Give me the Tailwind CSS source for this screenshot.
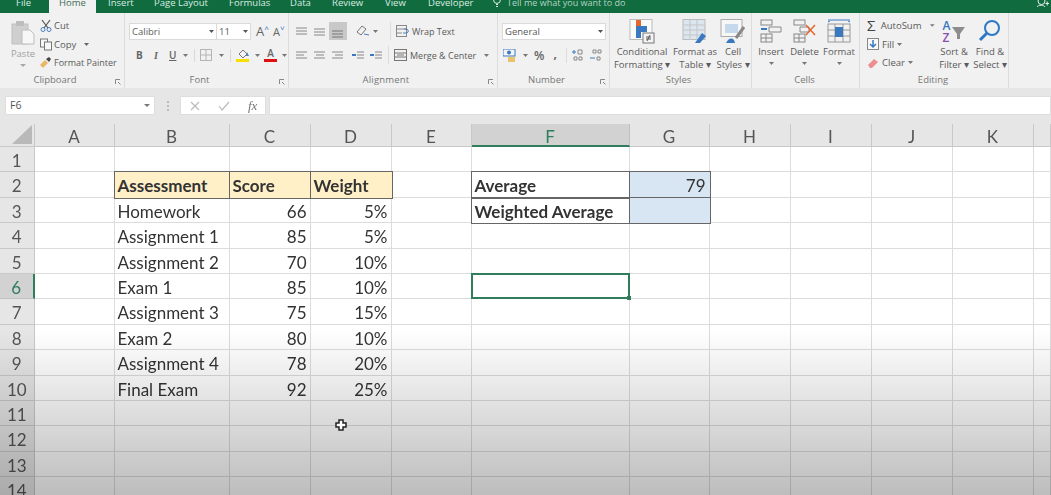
<!DOCTYPE html>
<html lang="en">
  <head>
    <meta charset="UTF-8" />
    <title>Weighted average</title>
    <script src="https://cdn.jsdelivr.net/npm/@tailwindcss/browser@4"></script>
  </head>
  <body class="w-[1051px] h-[495px] overflow-hidden bg-white font-['Open_Sans',sans-serif] text-[#555]">
    <div class="relative w-full h-full overflow-hidden blur-[0.5px]">
      <!-- tabs -->
      <div class="h-[13px] bg-[#106b3f] flex items-end pl-[5px] text-[9.5px] leading-[20px] text-[#dcebe3] relative overflow-hidden">
        <span class="h-[13px] px-[11px] flex items-end">File</span>
        <span class="h-[13px] w-[47px] ml-[7px] bg-[#f1f1f1] text-[#3f6b55] flex items-end justify-center">Home</span>
        <span class="h-[13px] ml-[12px] w-[23px] flex items-end">Insert</span>
        <span class="h-[13px] ml-[23px] w-[51px] flex items-end whitespace-nowrap">Page Layout</span>
        <span class="h-[13px] ml-[24px] w-[38px] flex items-end">Formulas</span>
        <span class="h-[13px] ml-[23px] w-[19px] flex items-end">Data</span>
        <span class="h-[13px] ml-[23px] w-[30px] flex items-end">Review</span>
        <span class="h-[13px] ml-[23px] w-[20px] flex items-end">View</span>
        <span class="h-[13px] ml-[23px] w-[41px] flex items-end">Developer</span>
        <svg class="ml-[23px] self-start -mt-[4px]" width="10" height="12" viewBox="0 0 10 12" fill="none" stroke="#dcebe3"><circle cx="5" cy="4" r="3.400" /><path d="M4 8.500h2M4 10.500h2" /></svg>
        <span class="h-[13px] ml-[5px] flex items-end whitespace-nowrap text-[9px] text-[#b7d3c4]">Tell me what you want to do</span>
        <svg class="absolute right-[2px] top-0" width="12" height="13" viewBox="0 0 12 13" fill="none" stroke="#e6f0ea"><circle cx="4.500" cy="1" r="3.500" /><path d="M0 7c1-2.400 7-2.400 8 0M8.500 3.500h3.500M10.200 1.500v4" /></svg>
      </div>

      <!-- ribbon -->
      <div class="h-[75px] bg-[#f1f1f1] flex text-[9.5px] leading-[13px] text-[#5a5a5a]">
        <!-- clipboard -->
        <div class="w-[125px] border-r border-[#dcdcdc] flex flex-col relative">
          <div class="flex-1 flex pl-[9px] pt-[6px]">
            <div class="w-[28px] flex flex-col items-center text-[#a0a0a0]">
              <svg class="mt-[1px]" width="24" height="25" viewBox="0 0 24 25"><rect x="1" y="4" width="16" height="20" fill="#cfcfcf" stroke="#c0c0c0" /><rect x="5" y="1" width="8" height="5" fill="#bdbdbd" /><path d="M11 10h8l4 4v10H11z" fill="#f7f7f7" stroke="#bdbdbd" /></svg>
              <span class="mt-[2px]">Paste</span>
              <svg class="mt-[4px]" width="6" height="4" viewBox="0 0 6 4"><path d="M0 0h6L3 3z" fill="#a8a8a8" /></svg>
            </div>
            <div class="ml-[3px] flex flex-col gap-[5.500px]">
              <div class="flex items-center gap-[2px] h-[13px]">
                <svg width="12" height="13" viewBox="0 0 12 13" fill="none"><path d="M2 1l6 8M10 1L4 9" stroke="#555" stroke-width="1.200" /><circle cx="3" cy="10.500" r="2" stroke="#4a7fc0" /><circle cx="9" cy="10.500" r="2" stroke="#4a7fc0" /></svg>
                <span>Cut</span>
              </div>
              <div class="flex items-center gap-[2px] h-[13px]">
                <svg width="12" height="13" viewBox="0 0 12 13" fill="none" stroke="#777"><rect x="0.500" y="1" width="7" height="8" fill="#f7f7f7" /><rect x="4.500" y="4" width="7" height="8" fill="#f7f7f7" /></svg>
                <span>Copy</span>
                <svg class="ml-[6px]" width="5" height="3" viewBox="0 0 5 3"><path d="M0 0h5L2.500 3z" fill="#666" /></svg>
              </div>
              <div class="flex items-center gap-[2px] h-[13px] -ml-[1px]">
                <svg width="13" height="13" viewBox="0 0 13 13"><path d="M1 9l5-5 3 3-5 5z" fill="#e8b868" /><path d="M7 3l3-2 2 2-2 3z" fill="#444" /></svg>
                <span class="text-[9px] whitespace-nowrap">Format Painter</span>
              </div>
            </div>
          </div>
          <div class="h-[14px] text-center pr-[14px] text-[#777] leading-[12px]">Clipboard</div>
          <svg class="absolute right-[3px] bottom-[3px]" width="6" height="6" viewBox="0 0 6 6" fill="none" stroke="#888"><path d="M0.500 5V0.500H5M3 3l2.500 2.500" /></svg>
        </div>

        <!-- font -->
        <div class="w-[164px] border-r border-[#dcdcdc] flex flex-col relative">
          <div class="flex-1 pl-[4px] pt-[10px]">
            <div class="flex items-center">
              <div class="w-[88px] h-[17px] bg-white border border-[#dadada] flex items-center justify-between px-[2px]">Calibri<svg width="5" height="3" viewBox="0 0 5 3"><path d="M0 0h5L2.500 3z" fill="#555" /></svg></div>
              <div class="w-[34px] h-[17px] bg-white border-y border-r border-[#dadada] flex items-center justify-between px-[2px]">11<svg width="5" height="3" viewBox="0 0 5 3"><path d="M0 0h5L2.500 3z" fill="#555" /></svg></div>
              <span class="ml-[5px] text-[13px] text-[#666]">A</span><span class="text-[8px] text-[#4a7fc0] -mt-[8px]">˄</span>
              <span class="ml-[4px] text-[11px] text-[#666]">A</span><span class="text-[8px] text-[#4a7fc0] -mt-[8px]">˅</span>
            </div>
            <div class="flex items-center h-[14px] mt-[8px] pl-[7px] text-[10px] text-[#666]">
              <b class="w-[8px]">B</b>
              <i class="ml-[10px] w-[7px] font-['Liberation_Serif'] font-bold">I</i>
              <u class="ml-[8px] w-[8px] font-semibold">U</u>
              <svg class="ml-[6px]" width="5" height="3" viewBox="0 0 5 3"><path d="M0 0h5L2.500 3z" fill="#777" /></svg>
              <div class="ml-[6px] w-px h-[13px] bg-[#d8d8d8]"></div>
              <svg class="ml-[5px]" width="12" height="12" viewBox="0 0 12 12" fill="none" stroke="#b5b5b5"><rect x="0.500" y="0.500" width="11" height="11" /><path d="M6 0v12M0 6h12" /></svg>
              <svg class="ml-[7px]" width="5" height="3" viewBox="0 0 5 3"><path d="M0 0h5L2.500 3z" fill="#777" /></svg>
              <div class="ml-[6px] w-px h-[13px] bg-[#d8d8d8]"></div>
              <svg class="ml-[5px]" width="14" height="14" viewBox="0 0 14 14"><path d="M3 6l4-4 4 4-4 4z" fill="#f4f4f4" stroke="#777" /><path d="M11 4l2 4h-3z" fill="#4a7fc0" /><rect x="0" y="11" width="13" height="3" fill="#f7e000" /></svg>
              <svg class="ml-[5px]" width="5" height="3" viewBox="0 0 5 3"><path d="M0 0h5L2.500 3z" fill="#777" /></svg>
              <div class="ml-[4px] w-[13px] h-[14px] flex flex-col items-center leading-[11px] font-semibold">A<div class="w-[13px] h-[3px] bg-[#e01010]"></div></div>
              <svg class="ml-[5px]" width="5" height="3" viewBox="0 0 5 3"><path d="M0 0h5L2.500 3z" fill="#777" /></svg>
            </div>
          </div>
          <div class="h-[14px] text-center pr-[14px] text-[#777] leading-[12px]">Font</div>
          <svg class="absolute right-[3px] bottom-[3px]" width="6" height="6" viewBox="0 0 6 6" fill="none" stroke="#888"><path d="M0.500 5V0.500H5M3 3l2.500 2.500" /></svg>
        </div>

        <!-- alignment -->
        <div class="w-[209px] border-r border-[#dcdcdc] flex flex-col relative">
          <div class="flex-1 pl-[7px] pt-[9px]">
            <div class="flex items-center h-[18px]">
              <svg width="12" height="8" viewBox="0 0 12 8" stroke="#888"><path d="M0 1h11M0 4h11M0 7h11" /></svg>
              <svg class="ml-[6px] mt-[2px]" width="12" height="8" viewBox="0 0 12 8" stroke="#888"><path d="M0 1h11M0 4h11M0 7h11" /></svg>
              <div class="ml-[3px] w-[18px] h-[18px] bg-[#c8c8c8] flex items-end justify-center pb-[2px]"><svg width="12" height="8" viewBox="0 0 12 8" stroke="#777"><path d="M0 1h11M0 4h11M0 7h11" /></svg></div>
              <svg class="ml-[9px]" width="14" height="12" viewBox="0 0 14 12" fill="none" stroke="#777"><path d="M1 7l5-6 4 3-5 6z" /><path d="M8 9l5 1" stroke="#4a7fc0" /></svg>
              <svg class="ml-[3px]" width="5" height="3" viewBox="0 0 5 3"><path d="M0 0h5L2.500 3z" fill="#777" /></svg>
              <div class="ml-[12px] w-px h-[18px] bg-[#dcdcdc]"></div>
              <svg class="ml-[5px]" width="14" height="12" viewBox="0 0 14 12" fill="none" stroke="#888"><rect x="0.500" y="0.500" width="10" height="11" /><path d="M0 4h10M0 8h6" /><path d="M7 8h4q3-2 0-4H8" stroke="#4a7fc0" /></svg>
              <span class="ml-[2px] text-[9px] whitespace-nowrap">Wrap Text</span>
            </div>
            <div class="flex items-center h-[18px] mt-[6px]">
              <svg width="12" height="8" viewBox="0 0 12 8" stroke="#888"><path d="M0 1h11M0 4h8M0 7h11" /></svg>
              <svg class="ml-[6px]" width="12" height="8" viewBox="0 0 12 8" stroke="#888"><path d="M0 1h11M2 4h8M0 7h11" /></svg>
              <svg class="ml-[6px]" width="12" height="8" viewBox="0 0 12 8" stroke="#888"><path d="M0 1h11M3 4h8M0 7h11" /></svg>
              <svg class="ml-[8px]" width="12" height="9" viewBox="0 0 12 9" stroke="#888"><path d="M5 1h7M5 4h7M5 7h7" /><path d="M0 4h4" stroke="#3a78c0" stroke-width="2" /></svg>
              <svg class="ml-[6px]" width="12" height="9" viewBox="0 0 12 9" stroke="#888"><path d="M5 1h7M5 4h7M5 7h7" /><path d="M0 4h4" stroke="#3a78c0" stroke-width="2" /></svg>
              <div class="ml-[6px] w-px h-[18px] bg-[#dcdcdc]"></div>
              <svg class="ml-[5px]" width="13" height="12" viewBox="0 0 13 12" fill="none" stroke="#777"><rect x="0.500" y="0.500" width="12" height="11" /><path d="M0 4h13M0 8h13M3 6h7" /></svg>
              <span class="ml-[3px] text-[9px] whitespace-nowrap">Merge &amp; Center</span>
              <svg class="ml-[8px]" width="5" height="3" viewBox="0 0 5 3"><path d="M0 0h5L2.500 3z" fill="#777" /></svg>
            </div>
          </div>
          <div class="h-[14px] text-center pr-[14px] text-[#777] leading-[12px] tracking-[0.2px]">Alignment</div>
          <svg class="absolute right-[3px] bottom-[3px]" width="6" height="6" viewBox="0 0 6 6" fill="none" stroke="#888"><path d="M0.500 5V0.500H5M3 3l2.500 2.500" /></svg>
        </div>

        <!-- number -->
        <div class="w-[112px] border-r border-[#dcdcdc] flex flex-col relative">
          <div class="flex-1 pl-[4px] pt-[10px]">
            <div class="w-[104px] h-[17px] bg-white border border-[#dadada] flex items-center justify-between px-[2px]">General<svg width="5" height="3" viewBox="0 0 5 3"><path d="M0 0h5L2.500 3z" fill="#555" /></svg></div>
            <div class="flex items-center h-[14px] mt-[8px] pl-[1px]">
              <svg width="13" height="13" viewBox="0 0 13 13"><rect x="0" y="0" width="12" height="7" fill="#f4f4f4" stroke="#3a78c0" /><circle cx="6" cy="3.500" r="2" fill="#3a78c0" /><rect x="5" y="8" width="7" height="5" fill="#e8c56a" /></svg>
              <svg class="ml-[7px]" width="5" height="3" viewBox="0 0 5 3"><path d="M0 0h5L2.500 3z" fill="#777" /></svg>
              <span class="ml-[6px] text-[12px] font-semibold text-[#666]">%</span>
              <span class="ml-[9px] text-[12px] font-bold text-[#666] -mt-[4px]">,</span>
              <div class="ml-[9px] w-px h-[15px] bg-[#dcdcdc]"></div>
              <svg class="ml-[5px]" width="12" height="12" viewBox="0 0 12 12" fill="none"><path d="M0 3h4M2 1v4" stroke="#3a78c0" /><path d="M6 1h4v4H6zM2 8h3v3H2zM7 8h3v3H7z" stroke="#888" /></svg>
              <svg class="ml-[6px]" width="12" height="12" viewBox="0 0 12 12" fill="none"><path d="M3 1h3v3H3zM8 1h3v3H8zM7 8h3v3H7z" stroke="#888" /><path d="M0 9h5" stroke="#3a78c0" /></svg>
            </div>
          </div>
          <div class="h-[14px] text-center pr-[14px] text-[#777] leading-[12px]">Number</div>
          <svg class="absolute right-[3px] bottom-[3px]" width="6" height="6" viewBox="0 0 6 6" fill="none" stroke="#888"><path d="M0.500 5V0.500H5M3 3l2.500 2.500" /></svg>
        </div>

        <!-- styles -->
        <div class="w-[142px] border-r border-[#dcdcdc] flex flex-col">
          <div class="flex-1 flex pt-[6px] pl-[2px]">
            <div class="w-[60px] flex flex-col items-center">
              <svg width="26" height="25" viewBox="0 0 26 25"><rect x="1" y="0.500" width="22" height="20" fill="#fafafa" stroke="#bbb" /><rect x="7" y="1" width="5" height="6" fill="#e3672d" /><rect x="7" y="7" width="11" height="6" fill="#3a78c0" /><rect x="7" y="13" width="5" height="6" fill="#3a78c0" /><rect x="14" y="14" width="11" height="10" fill="#f4f4f4" stroke="#777" /><path d="M17 18h5M17 20h5M21 16l-3 6" stroke="#555" fill="none" /></svg>
              <span class="mt-[1px] whitespace-nowrap">Conditional</span>
              <span class="whitespace-nowrap">Formatting ▾</span>
            </div>
            <div class="w-[46px] flex flex-col items-center">
              <svg width="26" height="25" viewBox="0 0 26 25"><rect x="1" y="0.500" width="22" height="20" fill="#dce6f1" stroke="#bbb" /><path d="M1 6h22M1 11h22M1 16h22M8 1v20M15 1v20" stroke="#c5c5c5" /><path d="M13 24l7-10 4 3-6 7z" fill="#3a78c0" /></svg>
              <span class="mt-[1px] whitespace-nowrap">Format as</span>
              <span class="whitespace-nowrap">Table ▾</span>
            </div>
            <div class="w-[30px] flex flex-col items-center">
              <svg width="26" height="25" viewBox="0 0 26 25"><rect x="1" y="0.500" width="21" height="17" fill="#f7f7f7" stroke="#aaa" /><rect x="5" y="5" width="13" height="9" fill="#c6d8ec" /><path d="M6 24q4-7 8-3l1 3z" fill="#3a78c0" /><path d="M16 19l8-11" stroke="#888" stroke-width="3" /></svg>
              <span class="mt-[1px]">Cell</span>
              <span class="whitespace-nowrap">Styles ▾</span>
            </div>
          </div>
          <div class="h-[14px] text-center pr-[4px] text-[#777] leading-[12px]">Styles</div>
        </div>

        <!-- cells -->
        <div class="w-[108px] border-r border-[#dcdcdc] flex flex-col">
          <div class="flex-1 flex pt-[6px] pl-[2px]">
            <div class="w-[34px] flex flex-col items-center">
              <svg width="22" height="25" viewBox="0 0 22 25" fill="none" stroke="#888"><rect x="1" y="1" width="11" height="5" /><rect x="1" y="15" width="11" height="8" /><path d="M6 15v8M1 19h11M9 8h12v5H9z" /><path d="M1 10h6" stroke="#3a78c0" stroke-width="2" /></svg>
              <span class="mt-[1px]">Insert</span>
              <svg class="mt-[4px]" width="5" height="3" viewBox="0 0 5 3"><path d="M0 0h5L2.500 3z" fill="#777" /></svg>
            </div>
            <div class="w-[33px] flex flex-col items-center">
              <svg width="24" height="25" viewBox="0 0 24 25" fill="none" stroke="#888"><rect x="1" y="1" width="11" height="5" /><rect x="1" y="15" width="11" height="8" /><path d="M6 15v8M1 19h11M7 8h9v5H7z" /><path d="M13 6l9 10M22 6l-9 10" stroke="#e3672d" stroke-width="1.500" /></svg>
              <span class="mt-[1px]">Delete</span>
              <svg class="mt-[4px]" width="5" height="3" viewBox="0 0 5 3"><path d="M0 0h5L2.500 3z" fill="#777" /></svg>
            </div>
            <div class="w-[36px] flex flex-col items-center">
              <svg width="24" height="25" viewBox="0 0 24 25" fill="none" stroke="#999"><path d="M1 1h22M3 2l-2 1M21 2l2 1" stroke="#3a78c0" /><rect x="1" y="5" width="22" height="18" /><path d="M8 5v18M16 5v18M1 11h22M1 17h22" /><rect x="8" y="8" width="8" height="10" fill="#3a78c0" stroke="none" /></svg>
              <span class="mt-[1px]">Format</span>
              <svg class="mt-[4px]" width="5" height="3" viewBox="0 0 5 3"><path d="M0 0h5L2.500 3z" fill="#777" /></svg>
            </div>
          </div>
          <div class="h-[14px] text-center pr-[2px] text-[#777] leading-[12px]">Cells</div>
        </div>

        <!-- editing -->
        <div class="w-[149px] border-r border-[#dcdcdc] flex flex-col">
          <div class="flex-1 flex pt-[6px] pl-[7px]">
            <div class="w-[68px] flex flex-col gap-[5.500px]">
              <div class="flex items-center h-[13px]">
                <span class="w-[14px] text-[15px] text-[#444] leading-[13px]">Σ</span><span class="ml-[1px]">AutoSum</span>
                <svg class="ml-[9px]" width="5" height="3" viewBox="0 0 5 3"><path d="M0 0h5L2.500 3z" fill="#777" /></svg>
              </div>
              <div class="flex items-center h-[13px]">
                <svg width="12" height="12" viewBox="0 0 12 12"><rect x="0.500" y="0.500" width="11" height="11" fill="#f9f9f9" stroke="#888" /><path d="M6 2v7M3 6l3 3 3-3" fill="none" stroke="#3a78c0" stroke-width="1.500" /></svg>
                <span class="ml-[3px]">Fill</span>
                <svg class="ml-[3px]" width="5" height="3" viewBox="0 0 5 3"><path d="M0 0h5L2.500 3z" fill="#777" /></svg>
              </div>
              <div class="flex items-center h-[13px]">
                <svg width="12" height="12" viewBox="0 0 12 12"><path d="M1 8l6-6 4 3-6 6H3z" fill="#ee8d8d" /></svg>
                <span class="ml-[3px]">Clear</span>
                <svg class="ml-[3px]" width="5" height="3" viewBox="0 0 5 3"><path d="M0 0h5L2.500 3z" fill="#777" /></svg>
              </div>
            </div>
            <div class="w-[33px] flex flex-col items-center ml-[3px]">
              <div class="h-[25px] flex items-center">
                <div class="flex flex-col text-[12px] leading-[12px] font-semibold"><span class="text-[#3a78c0]">A</span><span class="text-[#8a4fb0]">Z</span></div>
                <svg class="mt-[2px]" width="15" height="14" viewBox="0 0 15 14"><path d="M1 1h13L9 8v5H6V8z" fill="#8d8d8d" /></svg>
              </div>
              <span class="mt-[1px] whitespace-nowrap">Sort &amp;</span>
              <span class="whitespace-nowrap">Filter ▾</span>
            </div>
            <div class="w-[37px] ml-[2px] flex flex-col items-center">
              <svg width="24" height="25" viewBox="0 0 24 25" fill="none"><circle cx="14" cy="9" r="7" stroke="#2f78c4" stroke-width="2" /><path d="M9 14l-7 7" stroke="#2f78c4" stroke-width="3" /></svg>
              <span class="mt-[1px] whitespace-nowrap">Find &amp;</span>
              <span class="whitespace-nowrap">Select ▾</span>
            </div>
          </div>
          <div class="h-[14px] text-center pr-[2px] text-[#777] leading-[12px]">Editing</div>
        </div>
      </div>

      <!-- formula bar -->
      <div class="h-[36px] bg-[#e6e6e6] pt-[8px] flex items-start text-[10.5px]">
        <div class="ml-[5px] w-[150px] h-[19px] bg-white border border-[#dedede] flex items-center justify-between px-[4px] text-[#555]">F6<svg width="6" height="3" viewBox="0 0 6 3"><path d="M0 0h6L3 3z" fill="#777" /></svg></div>
        <div class="w-[25px] h-[19px] flex flex-col items-center justify-center gap-[2px]"><div class="w-[2px] h-[2px] bg-[#bbb]"></div><div class="w-[2px] h-[2px] bg-[#bbb]"></div><div class="w-[2px] h-[2px] bg-[#bbb]"></div></div>
        <div class="w-[86px] h-[19px] bg-white border border-[#dedede] flex items-center pl-[9px] gap-[18px]">
          <svg width="10" height="10" viewBox="0 0 10 10" stroke="#bbb" stroke-width="1.200"><path d="M1 1l8 8M9 1l-8 8" /></svg>
          <svg width="12" height="10" viewBox="0 0 12 10" fill="none" stroke="#bbb" stroke-width="1.200"><path d="M1 5l3 4 7-8" /></svg>
          <i class="font-['Liberation_Serif'] text-[#777] text-[13px]">fx</i>
        </div>
        <div class="ml-[3px] flex-1 h-[19px] bg-white border border-[#dedede]"></div>
      </div>

      <!-- sheet -->
      <div id="sheet" class="grid grid-cols-[34.500px_80px_115px_81px_81px_80px_158px_80px_81px_81px_81px_81px_17.500px] grid-rows-[23px] auto-rows-[25.4px] font-['Lato',sans-serif] text-[17px] leading-[27px] text-[#333]"></div>

      <!-- bottom fade from the video -->
      <div class="absolute inset-x-0 bottom-0 h-[165px] bg-linear-to-b from-transparent to-black/26"></div>

      <!-- cursor -->
      <svg class="absolute left-[335px] top-[419px]" width="12" height="12" viewBox="0 0 12 12"><path d="M4 1h4v3h3v4H8v3H4V8H1V4h3z" fill="#fff" stroke="#222" stroke-width="1.500" /></svg>
    </div>

    <script>
      const cols = ["A", "B", "C", "D", "E", "F", "G", "H", "I", "J", "K", ""];
      const rows = {
        2: { B: "Assessment", C: "Score", D: "Weight", F: "Average", G: "79" },
        3: { B: "Homework", C: "66", D: "5%", F: "Weighted Average", G: "" },
        4: { B: "Assignment 1", C: "85", D: "5%" },
        5: { B: "Assignment 2", C: "70", D: "10%" },
        6: { B: "Exam 1", C: "85", D: "10%" },
        7: { B: "Assignment 3", C: "75", D: "15%" },
        8: { B: "Exam 2", C: "80", D: "10%" },
        9: { B: "Assignment 4", C: "78", D: "20%" },
        10: { B: "Final Exam", C: "92", D: "25%" },
      };

      const cell = (cls, text) => {
        const d = document.createElement("div");
        d.className = cls;
        d.textContent = text || "";
        return d;
      };

      const sheet = document.querySelector("#sheet");
      const corner = cell("bg-[#e6e6e6] border-r border-b border-[#c8c8c8] flex items-end justify-end pr-[2px] pb-[2px]");
      corner.innerHTML = '<svg width="20" height="19" viewBox="0 0 20 19"><path d="M20 0v19H0z" fill="#b9b9b9" /></svg>';
      sheet.appendChild(corner);

      cols.forEach((c) => {
        sheet.appendChild(
          cell(
            c === "F"
              ? "bg-[#d2d2d2] border-r border-b-2 border-r-[#c0c0c0] border-b-[#2f7d5a] text-center leading-[25px] text-[#2f7d5a]"
              : "bg-[#e6e6e6] border-r border-b border-[#c8c8c8] text-center leading-[25px] text-[#555]",
            c
          )
        );
      });

      for (let r = 1; r <= 14; r++) {
        sheet.appendChild(
          cell(
            r === 6
              ? "bg-[#d2d2d2] border-r-2 border-b border-r-[#2f7d5a] border-b-[#c0c0c0] text-center text-[#2f7d5a]"
              : "bg-[#e6e6e6] border-r border-b border-[#c8c8c8] text-center text-[#555]",
            r
          )
        );
        cols.forEach((c) => {
          const val = rows[r] && rows[r][c];
          const isNum = r > 2 && (c === "C" || c === "D");
          const framed = rows[r] && c in rows[r] && (r === 2 || c === "F" || c === "G");
          let cls = "border-r border-b border-[#dcdcdc] whitespace-nowrap px-[3px] relative";
          if (isNum || c === "G") cls += " text-right";
          if (framed) cls += " outline outline-[1.5px] outline-[#666] z-10 border-transparent";
          if (framed && r === 2 && c !== "F" && c !== "G") cls += " bg-[#fff0c8] font-bold";
          if (c === "F" && framed) cls += " font-bold";
          if (c === "G" && framed) cls += " bg-[#d8e6f3]";
          const el = cell(cls, val);
          if (r === 6 && c === "F") {
            el.appendChild(cell("absolute inset-0 outline-2 -outline-offset-1 outline-[#2f7d5a]"));
            el.appendChild(cell("absolute -right-[2px] -bottom-[2px] w-[4px] h-[4px] bg-[#2f7d5a]"));
            el.classList.add("z-10");
          }
          sheet.appendChild(el);
        });
      }
    </script>
  </body>
</html>
